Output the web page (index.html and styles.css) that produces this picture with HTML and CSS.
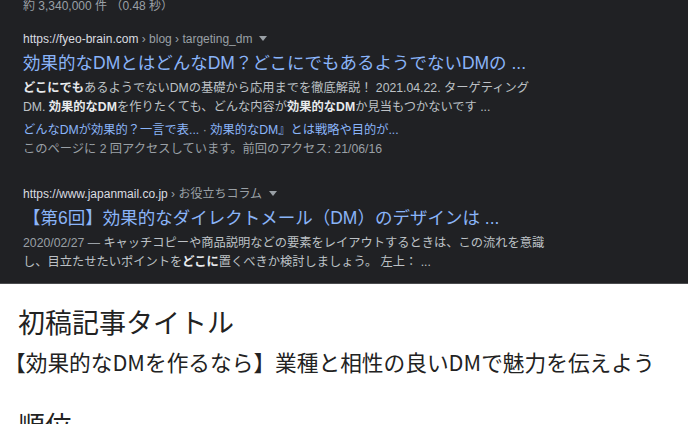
FILE: index.html
```html
<!DOCTYPE html>
<html lang="ja">
<head>
<meta charset="utf-8">
<title>初稿記事タイトル</title>
<link rel="stylesheet" href="styles.css">
</head>
<body>
<div class="serp">
  <div class="stats">約 3,340,000 件 （0.48 秒）</div>
  <div class="result">
    <div class="cite"><span class="domain">https://fyeo-brain.com</span><span class="path"> › blog › targeting_dm</span><svg class="caret" width="8" height="5" viewBox="0 0 8 5"><path d="M0 0h8L4 5z" fill="#9aa0a6"/></svg></div>
    <div class="title">効果的なDMとはどんなDM？どこにでもあるようでないDMの ...</div>
    <div class="snippet"><b>どこにでも</b>あるようでないDMの基礎から応用までを徹底解説！ 2021.04.22. ターゲティング<br>DM. <b>効果的なDM</b>を作りたくても、どんな内容が<b>効果的なDM</b>か見当もつかないです ...</div>
    <div class="sitelinks">どんなDMが効果的？一言で表... <span class="dot">·</span> 効果的なDM』とは戦略や目的が...</div>
    <div class="visited">このページに 2 回アクセスしています。前回のアクセス: 21/06/16</div>
  </div>
  <div class="result">
    <div class="cite"><span class="domain">https://www.japanmail.co.jp</span><span class="path"> › お役立ちコラム</span><svg class="caret" width="8" height="5" viewBox="0 0 8 5"><path d="M0 0h8L4 5z" fill="#9aa0a6"/></svg></div>
    <div class="title">【第6回】効果的なダイレクトメール（DM）のデザインは ...</div>
    <div class="snippet"><span class="date">2020/02/27 — </span>キャッチコピーや商品説明などの要素をレイアウトするときは、この流れを意識<br>し、目立たせたいポイントを<b>どこに</b>置くべきか検討しましょう。 左上： ...</div>
  </div>
</div>
<div class="draft">
  <h2 class="heading">初稿記事タイトル</h2>
  <p class="subtitle">【効果的なDMを作るなら】業種と相性の良いDMで魅力を伝えよう</p>
  <h2 class="heading rank">順位</h2>
</div>
</body>
</html>
```
FILE: styles.css
```css
html, body {
  margin: 0;
  padding: 0;
  background: #ffffff;
  overflow: hidden;
}
body {
  width: 688px;
  height: 424px;
}
.serp {
  background: #202124;
  height: 283px;
  border-bottom: 1px solid #4a4b4e;
  padding: 0 0 0 23px;
  font-family: "Liberation Sans", Arial, "Noto Sans CJK JP", sans-serif;
  color: #bdc1c6;
  overflow: hidden;
}
.stats {
  font-size: 12px;
  line-height: 16px;
  color: #9aa0a6;
  margin-top: -2px;
}
.result {
  margin-top: 17px;
}
.result + .result {
  margin-top: 27px;
}
.cite {
  font-size: 12px;
  line-height: 16px;
  white-space: nowrap;
}
.domain {
  color: #dadce0;
}
.path {
  color: #9aa0a6;
}
.caret {
  margin-left: 7px;
  vertical-align: 2px;
}
.title {
  margin-top: 5px;
  font-size: 17.5px;
  line-height: 22px;
  color: #8ab4f8;
  white-space: nowrap;
}
.snippet {
  margin-top: 5px;
  font-size: 12.25px;
  line-height: 19px;
  color: #bdc1c6;
  white-space: nowrap;
}
.snippet b {
  color: #e8eaed;
  font-weight: bold;
}
.date {
  color: #9aa0a6;
}
.sitelinks {
  margin-top: 4px;
  font-size: 12.25px;
  line-height: 19px;
  color: #8ab4f8;
  white-space: nowrap;
}
.dot {
  color: #9aa0a6;
}
.visited {
  font-size: 12.25px;
  line-height: 19px;
  color: #9aa0a6;
  white-space: nowrap;
}
.draft {
  padding: 0 18px;
  font-family: "Noto Sans CJK JP", "Noto Sans", sans-serif;
  color: #222222;
}
.heading {
  margin: 20px 0 0;
  font-size: 27px;
  font-weight: 400;
  line-height: 36px;
}
.subtitle {
  margin: 7px 0 0;
  font-size: 21.7px;
  line-height: 30px;
  text-indent: -14px;
  white-space: nowrap;
}
.rank {
  margin-top: 30px;
}
```
